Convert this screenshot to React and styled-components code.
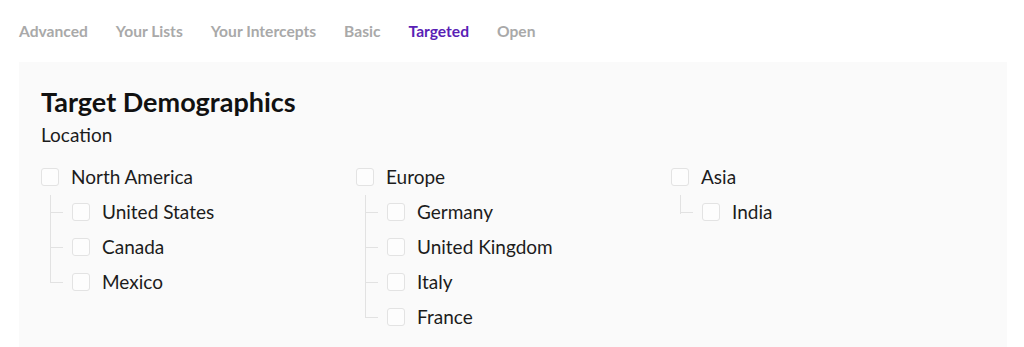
import React from "react";
import styled, { createGlobalStyle } from "styled-components";

const Global = createGlobalStyle`
  html, body { margin: 0; padding: 0; background: #fff; }
  body { font-family: "Lato", "Noto Sans", sans-serif; color: #1c1c1c; }
`;

const Page = styled.div`
  padding: 0 17px 0 19px;
`;

const Tabs = styled.nav`
  display: flex;
  gap: 28px;
  height: 62px;
  align-items: center;
`;

const Tab = styled.span`
  font-size: 15.6px;
  font-weight: 700;
  color: ${(p) => (p.$active ? "#5a1fb5" : "#a9a9a9")};
`;

const Panel = styled.section`
  box-sizing: border-box;
  background: #fafafa;
  padding: 24px 22px 0;
  height: 285px;
  overflow: hidden;
`;

const Title = styled.h1`
  margin: 0;
  font-size: 27px;
  font-weight: 700;
  line-height: 32px;
  color: #111;
`;

const Subtitle = styled.h2`
  margin: 5px 0 12px;
  font-size: 19px;
  font-weight: 400;
  line-height: 24px;
  color: #1c1c1c;
`;

const Columns = styled.div`
  display: grid;
  grid-template-columns: repeat(3, 315px);
`;

const Row = styled.label`
  display: flex;
  align-items: center;
  gap: 12px;
  height: 35px;
  font-size: 19px;
  color: #1c1c1c;
`;

const Box = styled.span`
  width: 16px;
  height: 16px;
  border: 1px solid #e3e3e3;
  border-radius: 3px;
  background: #fdfdfd;
  flex: none;
`;

const Children = styled.div`
  margin-left: 9px;
`;

const Child = styled.div`
  position: relative;
  padding-left: 22px;
  &::before {
    content: "";
    position: absolute;
    left: 0;
    top: ${(p) => (p.$first ? "1px" : "0")};
    height: ${(p) => (p.$last ? "calc(50% + 1px)" : "100%")};
    width: 1px;
    background: #e2e2e2;
  }
  &::after {
    content: "";
    position: absolute;
    left: 0;
    top: 50%;
    width: 13px;
    height: 1px;
    background: #e2e2e2;
  }
`;

const data = [
  { name: "North America", kids: ["United States", "Canada", "Mexico"] },
  { name: "Europe", kids: ["Germany", "United Kingdom", "Italy", "France"] },
  { name: "Asia", kids: ["India"] },
];

const tabs = ["Advanced", "Your Lists", "Your Intercepts", "Basic", "Targeted", "Open"];

export default function App() {
  return (
    <>
      <Global />
      <Page>
        <Tabs>
          {tabs.map((t) => (
            <Tab key={t} $active={t === "Targeted"}>{t}</Tab>
          ))}
        </Tabs>
        <Panel>
          <Title>Target Demographics</Title>
          <Subtitle>Location</Subtitle>
          <Columns>
            {data.map((g) => (
              <div key={g.name}>
                <Row>
                  <Box />
                  {g.name}
                </Row>
                <Children>
                  {g.kids.map((k, i) => (
                    <Child key={k} $first={i === 0} $last={i === g.kids.length - 1}>
                      <Row>
                        <Box />
                        {k}
                      </Row>
                    </Child>
                  ))}
                </Children>
              </div>
            ))}
          </Columns>
        </Panel>
      </Page>
    </>
  );
}
